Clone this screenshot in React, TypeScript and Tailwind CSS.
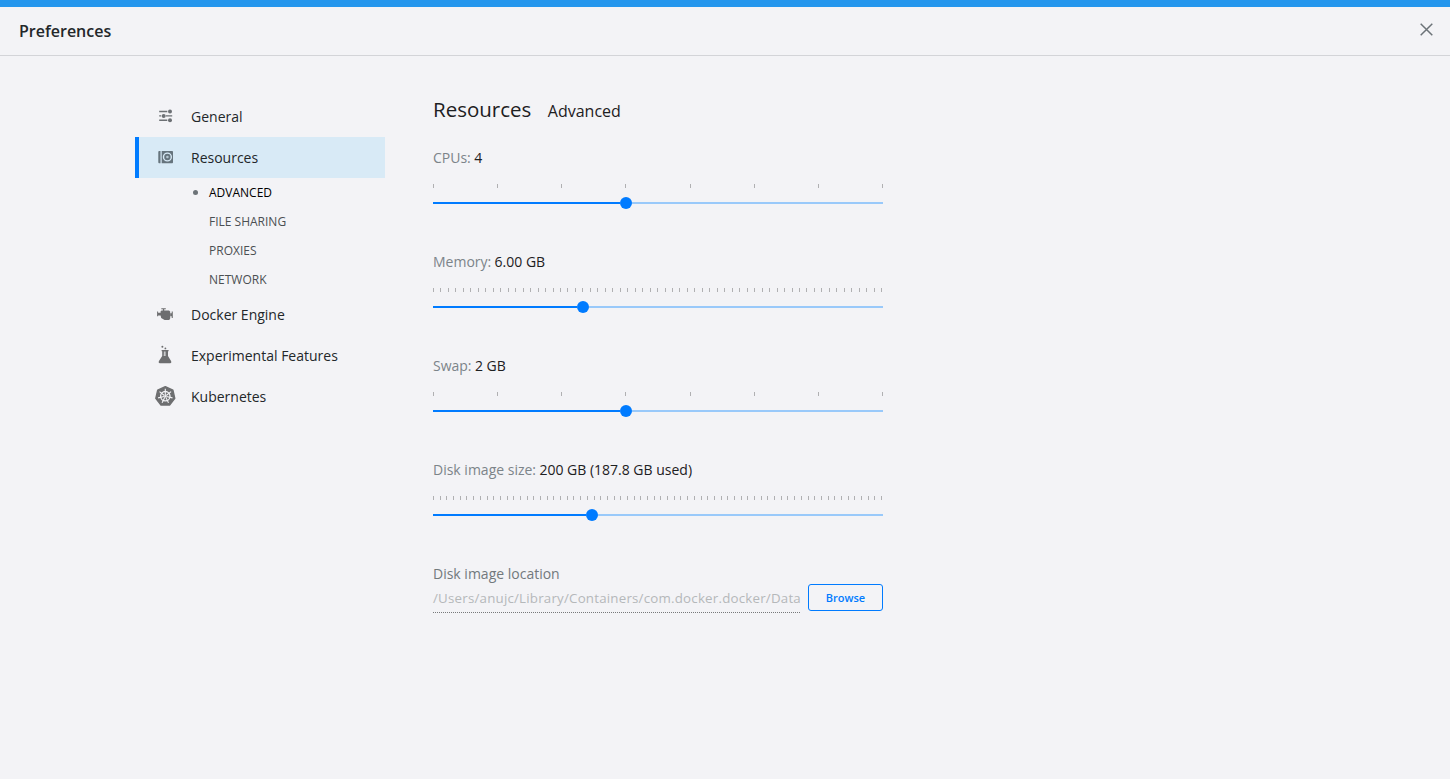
import type { ReactNode } from 'react';

function GeneralIcon() {
  return (
    <svg width="16" height="14" viewBox="0 0 16 14" fill="#6c7074" stroke="#6c7074" className="ml-0.5">
      <path d="M1.2 2.5H9.3M1.2 6.9H3.2M8 6.9H14.2M1.2 11.3H9.3" strokeWidth="1.4" fill="none" />
      <circle cx="12" cy="2.5" r="2" stroke="none" />
      <circle cx="5.7" cy="6.9" r="2" stroke="none" />
      <circle cx="12" cy="11.2" r="2" stroke="none" />
    </svg>
  );
}

function ResourcesIcon() {
  return (
    <svg width="16" height="14" viewBox="0 0 16 14" fill="#66747d" className="ml-0.5">
      <path d="M1.2 1H2.5V13.2H1.2Q0.3 13.2 0.3 12.3V1.9Q0.3 1 1.2 1Z" />
      <path d="M3.7 1H14.2Q15 1 15 1.9V12.3Q15 13.2 14.2 13.2H3.7Z" />
      <circle cx="9.4" cy="7" r="3.9" fill="none" stroke="#d8eaf6" strokeWidth="1.4" />
      <circle cx="9.4" cy="7" r="1.3" fill="#b4c5cf" />
    </svg>
  );
}

function EngineIcon() {
  return (
    <svg width="18" height="14" viewBox="0 0 18 14" fill="#6d6e70">
      <path d="M5.3 1.3H9.8V2.3H8.2V3.4H13L14.2 4.4V11.6L13.2 12.9H8.6L5.2 11L4.6 8.6H2.1V9.3H1.1V4.6H2.1V5.8H4.6V4.2L5.6 3.4H6.9V2.3H5.3Z" />
      <path d="M14.2 6.3H15.7V4.6H16.8V11H15.7V9.3H14.2Z" />
    </svg>
  );
}

function FlaskIcon() {
  return (
    <svg width="16" height="20" viewBox="0 0 16 20" fill="#6d6e70">
      <circle cx="5.4" cy="1.8" r="1" />
      <circle cx="8.4" cy="3.4" r="0.9" />
      <path d="M4.6 5.1H11.6V6.3H11V11L14.2 16.3Q14.8 18.1 13.2 18.3H2.8Q1.2 18.1 1.8 16.3L5.2 11V6.3H4.6Z" />
      <path d="M6.9 6.6H8.6V11H6.7Z" fill="#c9cacc" />
    </svg>
  );
}

function KubernetesIcon() {
  const spokes = [0, 1, 2, 3, 4, 5, 6].map((i) => (i * 360) / 7);
  return (
    <svg width="22" height="22" viewBox="0 0 22 22">
      <path
        d="M11.3 1.7L18.9 5.2L20.8 13.4L15.6 20.1H7L1.8 13.4L3.7 5.2Z"
        fill="#6d6e70"
        stroke="#6d6e70"
        strokeWidth="1.4"
        strokeLinejoin="round"
      />
      <g stroke="#f3f3f6" fill="none">
        <circle cx="11.3" cy="11.2" r="4.7" strokeWidth="1.3" />
        {spokes.map((a) => (
          <path key={a} d="M11.3 10V3.8" strokeWidth="1.1" transform={`rotate(${a} 11.3 11.2)`} />
        ))}
      </g>
      <circle cx="11.3" cy="11.2" r="1.1" fill="#f3f3f6" />
    </svg>
  );
}

function NavItem({ icon, label, active }: { icon: ReactNode; label: string; active?: boolean }) {
  return (
    <div
      className={
        'flex h-[41px] items-center border-l-4 text-sm text-[#23272a] ' +
        (active ? 'border-[#007bff] bg-[#d8eaf6]' : 'border-transparent')
      }
    >
      <span className="ml-[13px] mr-[13px] flex w-[26px] shrink-0 justify-center pb-px">{icon}</span>
      {label}
    </div>
  );
}

function SubItem({ label, active }: { label: string; active?: boolean }) {
  return (
    <div
      className={
        'flex h-[29px] items-center pl-[58px] text-xs ' + (active ? 'text-black' : 'text-[#4b4f52]')
      }
    >
      <span className={'mr-[11px] size-[5px] rounded-full ' + (active ? 'bg-[#6c7378]' : '')} />
      {label}
    </div>
  );
}

function Slider({ label, value, steps, filled }: { label: string; value: string; steps: number; filled: number }) {
  return (
    <div className="h-[104px] w-[450px]">
      <div className="h-5 text-sm leading-5 text-[#7c8489]">
        {label} <span className="-ml-[0.3px] text-[#1d2022]">{value}</span>
      </div>
      <div className="mt-4 flex h-1 justify-between">
        {Array.from({ length: steps + 1 }, (_, i) => (
          <span key={i} className="w-px bg-[#b0b0b2]" />
        ))}
      </div>
      <div className="mt-[9px] flex h-3 items-center">
        <div className="h-0.5 bg-[#007bff]" style={{ width: filled - 6 }} />
        <div className="size-3 rounded-full bg-[#007bff]" />
        <div className="h-0.5 flex-1 bg-[#99c9fa]" />
      </div>
    </div>
  );
}

export default function App() {
  return (
    <div className="h-[779px] w-[1450px] overflow-hidden border-t-[7px] border-[#2496ed] bg-[#f3f3f6] font-['Open_Sans',sans-serif]">
      <header className="flex h-[49px] items-center justify-between border-b border-[#d3d4d8] pl-[19px] pr-[17px]">
        <h1 className="text-base font-semibold text-[#23272a]">Preferences</h1>
        <svg width="13" height="13" viewBox="0 0 13 13" className="mb-[3px]" stroke="#6c7378" strokeWidth="1.5">
          <path d="M0.7 0.7L12.3 12.3M12.3 0.7L0.7 12.3" />
        </svg>
      </header>
      <div className="flex pl-[135px]">
        <nav className="w-[250px] pt-10">
          <NavItem icon={<GeneralIcon />} label="General" />
          <NavItem icon={<ResourcesIcon />} label="Resources" active />
          <SubItem label="ADVANCED" active />
          <SubItem label="FILE SHARING" />
          <SubItem label="PROXIES" />
          <SubItem label="NETWORK" />
          <NavItem icon={<EngineIcon />} label="Docker Engine" />
          <NavItem icon={<FlaskIcon />} label="Experimental Features" />
          <NavItem icon={<KubernetesIcon />} label="Kubernetes" />
        </nav>
        <main className="ml-12 w-[450px] pt-[37px]">
          <div className="mb-[23px] flex h-8 items-baseline gap-[16.5px] text-[#1d2022]">
            <h2 className="text-[20.5px] leading-8">Resources</h2>
            <span className="text-base">Advanced</span>
          </div>
          <Slider label="CPUs:" value="4" steps={7} filled={193} />
          <Slider label="Memory:" value="6.00 GB" steps={60} filled={150} />
          <Slider label="Swap:" value="2 GB" steps={7} filled={193} />
          <Slider label="Disk image size:" value="200 GB (187.8 GB used)" steps={67} filled={159} />
          <div className="text-sm leading-5 text-[#72797d]">Disk image location</div>
          <div className="flex gap-2">
            <div className="h-[29px] w-[367px] whitespace-nowrap border-b border-dotted border-[#77797b] text-[13.3333px] leading-7 tracking-[0.2px] text-[#b5b8ba]">
              /Users/anujc/Library/Containers/com.docker.docker/Data
            </div>
            <button className="h-[27px] w-[75px] rounded-[3px] border border-[#007bff] pt-px text-[11px] font-semibold text-[#007bff]">
              Browse
            </button>
          </div>
        </main>
      </div>
    </div>
  );
}
